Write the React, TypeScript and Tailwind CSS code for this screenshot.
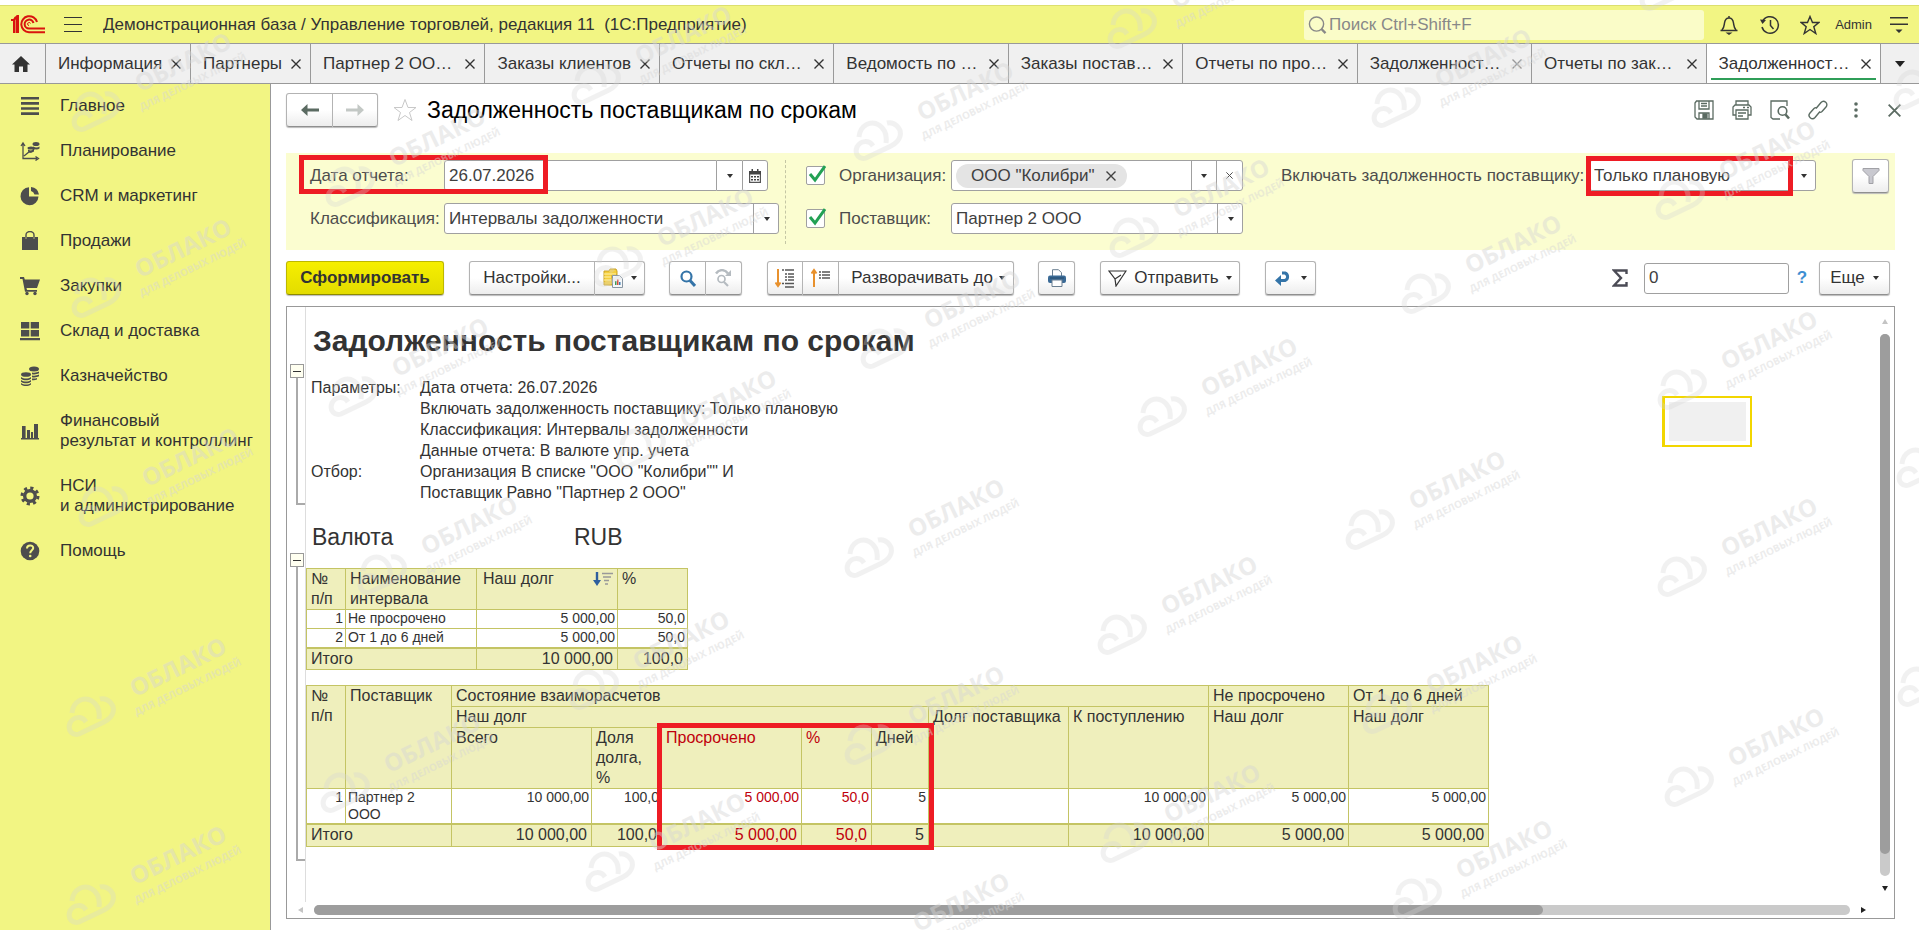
import React from 'react';

const tabs = [
  { title: 'Партнер 2 ОО…' },
  { title: 'Заказы клиентов' },
  { title: 'Отчеты по скл…' },
  { title: 'Ведомость по …' },
  { title: 'Заказы постав…' },
  { title: 'Отчеты по про…' },
  { title: 'Задолженност…', dim: true },
  { title: 'Отчеты по зак…' },
  { title: 'Задолженност…', active: true },
];

const menu = [
  { icon: 'main', label: ['Главное'] },
  { icon: 'plan', label: ['Планирование'] },
  { icon: 'crm', label: ['CRM и маркетинг'] },
  { icon: 'sales', label: ['Продажи'] },
  { icon: 'cart', label: ['Закупки'] },
  { icon: 'stock', label: ['Склад и доставка'] },
  { icon: 'money', label: ['Казначейство'] },
  { icon: 'chart', label: ['Финансовый', 'результат и контроллинг'] },
  { icon: 'gear', label: ['НСИ', 'и администрирование'] },
  { icon: 'help', label: ['Помощь'] },
];

// centres of the cloud marks
const marks = [
  [96, 112], [350, 187], [96, 298], [596, 85], [618, 267], [1132, 29], [878, 141], [1134, 238],
  [1396, 108], [1680, 200], [1426, 294], [1918, 90], [1664, -9], [353, 397], [641, 449], [103, 507],
  [382, 575], [885, 349], [1162, 417], [869, 558], [1122, 635], [1682, 390], [1370, 530], [1682, 577],
  [1921, 468], [91, 717], [91, 905], [345, 793], [594, 690], [610, 872], [869, 745], [1125, 843],
  [874, 952], [1387, 714], [1689, 787], [1417, 899], [1922, 687],
];

const Watermarks: React.FC = () => (
  <div aria-hidden="true" className="pointer-events-none absolute inset-0 z-30 select-none overflow-hidden text-[#d6d6d6] opacity-45">
    {marks.map(([x, y]) => (
      <div key={`${x}-${y}`} className="absolute" style={{ left: x, top: y }}>
        <svg className="absolute -left-[25px] -top-[21px] opacity-70" width="50" height="42" viewBox="0 0 50 42" fill="none" stroke="currentColor" strokeWidth="5">
          <path d="M6 17C7 5 18 0 26 5c6 4 8 11 7 18" />
          <path d="M20 26C16 20 8 20 4 27c-3 8 3 13 9 11l25-12c10-5 12-14 6-20-3-3-6-4-10-3" />
        </svg>
        <div className="absolute left-[30px] -top-[66px] w-[120px] -rotate-[26deg] text-center font-['Open_Sans',sans-serif] font-bold whitespace-nowrap">
          <div className="text-[24px] leading-[30px]">ОБЛАКО</div>
          <div className="text-[10px] leading-[14px]">ДЛЯ ДЕЛОВЫХ ЛЮДЕЙ</div>
        </div>
      </div>
    ))}
  </div>
);

const Caret: React.FC = () => (
  <svg className="shrink-0" width="6" height="4" viewBox="0 0 6 4" fill="#333"><path d="M0 0h6L3 4z" /></svg>
);

const Cross: React.FC<{ size?: number }> = ({ size = 10 }) => (
  <svg width={size} height={size} viewBox="0 0 10 10" stroke="currentColor" strokeWidth="1.4"><path d="M.5.5l9 9M9.5.5l-9 9" /></svg>
);

const MenuIcon: React.FC<{ name: string }> = ({ name }) => (
  <svg className="shrink-0" width="20" height="20" viewBox="0 0 20 20" fill="#4d4d4d">
    {name === 'main' && <path d="M1 1h18v2.6H1zM1 6.1h18v2.6H1zM1 11.2h18v2.6H1zM1 16.3h18v2.6H1z" />}
    {name === 'plan' && (
      <>
        <path d="M3 3v14.5h14M1 5l2-3 2 3M15.500 15.500l3 2-3 2M4 15l5-4 2 0 4-4" fill="none" stroke="#4d4d4d" strokeWidth="1.3" />
        <ellipse cx="11" cy="7" rx="3.500" ry="1.500" /><ellipse cx="16" cy="3" rx="3.500" ry="2" />
        <path d="M8 8.500c2 1.200 4.500 1.200 6 0v2c-2 1.200-4 1.200-6 0zM13 5.500c2 1.200 5 1.200 6.500 0v2c-1.500 1.200-4.500 1.200-6.500 0z" />
      </>
    )}
    {name === 'crm' && <path d="M9 1.200V10.500h9.500A9 9 0 1 1 9 1.200zM11 1a9 9 0 0 1 8 7.500h-4.500A5 5 0 0 0 11 5z" />}
    {name === 'sales' && (
      <>
        <path d="M2 6h3v2h2V6h6v2h2V6h3v13H2z" />
        <path d="M6 8V4a4 3.500 0 0 1 8 0v4" fill="none" stroke="#4d4d4d" strokeWidth="1.400" />
      </>
    )}
    {name === 'cart' && (
      <>
        <path d="M0 1h4l.8 2.500H20l-3 8.500H6.500l.5 2h10v1.700H5L2.500 3H0z" />
        <circle cx="7" cy="17.500" r="1.700" /><circle cx="15" cy="17.500" r="1.700" />
      </>
    )}
    {name === 'stock' && <path d="M1 1h8.300v6.500H1zM10.700 1H19v6.500h-8.300zM1 9h8.300v6.500H1zM10.700 9H19v6.500h-8.300zM0 17h20v2.300H0z" />}
    {name === 'money' && (
      <>
        <ellipse cx="14" cy="3" rx="5" ry="2.500" /><ellipse cx="6" cy="8.500" rx="5" ry="2.300" />
        <path d="M1 11c3 2 7 2 10 0v1.700c-3 2-7 2-10 0zM1 14c3 2 7 2 10 0v1.700c-3 2-7 2-10 0zM1 17c3 2 7 2 10 0v1.500c-3 2-7 2-10 0zM12 6.500c3 .5 5 0 7-1v1.700c-2 1-4 1.500-7 1zM12 9.500c3 .5 5 0 7-1v1.700c-2 1-4 1.500-7 1zM12 12.500c2 .3 4 0 5-.500v1.600c-2 .8-3 .9-5 .6z" />
      </>
    )}
    {name === 'chart' && <path d="M1 17h18v1.600H1zM2 5h3.600v12H2zM7 9h3v8H7zM11 11h2v6h-2zM14 3h4v14h-4z" />}
    {name === 'gear' && (
      <>
        <circle cx="10" cy="10" r="5.300" fill="none" stroke="#4d4d4d" strokeWidth="3.400" />
        <circle cx="10" cy="10" r="8" fill="none" stroke="#4d4d4d" strokeWidth="3" strokeDasharray="3.140 3.143" />
      </>
    )}
    {name === 'help' && (
      <>
        <circle cx="10" cy="10" r="9.300" />
        <path d="M7 7.500c0-4 6.200-4 6.200-.5 0 2.200-3 2.200-3 5.200" fill="none" stroke="#f2f583" strokeWidth="2" />
        <circle cx="10.200" cy="15" r="1.300" fill="#f2f583" />
      </>
    )}
  </svg>
);

const Tab: React.FC<{ title: string; active?: boolean; dim?: boolean; className?: string }> = ({ title, active, dim, className = 'flex-1' }) => (
  <div className={`relative flex min-w-0 items-center justify-between border-r border-[#999] pl-3 pr-[9px] ${active ? 'bg-white' : ''} ${className}`}>
    <a href="#tab" className="truncate text-[17px] leading-5 text-[#333]">{title}</a>
    <button type="button" aria-label="Закрыть вкладку" className={dim ? 'text-[#999]' : 'text-[#333]'}><Cross /></button>
    {active && <span className="absolute bottom-[3px] left-1 right-1 h-[2px] bg-[#2f9e58]" />}
  </div>
);

const ToolButton: React.FC<{ className?: string; label?: string; children: React.ReactNode }> = ({ className = '', label, children }) => (
  <button
    type="button"
    aria-label={label}
    className={`flex h-[34px] items-center justify-center border border-[#b3b3b3] border-b-[#8f8f8f] bg-linear-to-b from-white from-50% to-[#ededed] text-[17px] text-[#333] shadow-[0_1px_1px_#bbb] ${className}`}
  >
    {children}
  </button>
);

const Select: React.FC<{ id: string; value: string; className?: string }> = ({ id, value, className = '' }) => (
  <div className={`relative h-[31px] ${className}`}>
    <select id={id} className="h-full w-full appearance-none rounded-[3px] border border-[#a0a0a0] bg-white pl-1 pr-7 text-[17px] text-[#404040]">
      <option>{value}</option>
    </select>
    <span className="pointer-events-none absolute inset-y-0 right-0 flex w-[26px] items-center justify-center border-l border-[#a0a0a0]"><Caret /></span>
  </div>
);

const Check: React.FC<{ id: string; label: string }> = ({ id, label }) => (
  <div className="flex w-[145px] items-center gap-[14px]">
    <span className="relative size-[19px]">
      <input id={id} type="checkbox" defaultChecked className="block size-[19px] appearance-none rounded-xs border border-[#a0a0a0] bg-white" />
      <svg className="pointer-events-none absolute left-[2px] -top-[2px]" width="18" height="20" viewBox="0 0 18 20" fill="none" stroke="#23a154" strokeWidth="3"><path d="M2 10l5 6L17 2" /></svg>
    </span>
    <label htmlFor={id}>{label}</label>
  </div>
);

const Header: React.FC = () => (
  <header className="mt-[5px] flex h-[39px] items-center border-t border-b border-t-[#dcdf6f] border-b-[#999] bg-[#f2f583] text-[#333]">
    <svg className="ml-[11px] shrink-0" width="34" height="19" viewBox="0 0 34 19" fill="none" stroke="#d9140e" strokeWidth="2">
      <path d="M0 5h3v13M3 4.500L5.500 2v16M3.500 3l3.500-2V18" />
      <path d="M26 7A8 8 0 1 0 18 17.200h16" />
      <path d="M22.500 8A4.500 4.500 0 1 0 18 13.600h16" />
      <path d="M19.500 8.500a1.500 1.500 0 1 0-1.500 2" strokeWidth="1" />
    </svg>
    <button type="button" aria-label="Меню" className="ml-[19px] flex w-[18px] flex-col gap-[6px]">
      <span className="h-px w-full bg-[#333]" /><span className="h-px w-full bg-[#333]" /><span className="h-px w-full bg-[#333]" />
    </button>
    <span className="ml-[21px] flex-1 truncate text-[17px] whitespace-pre">Демонстрационная база / Управление торговлей, редакция 11  (1С:Предприятие)</span>
    <label className="flex h-[30px] w-[400px] items-center gap-[2px] rounded-[3px] bg-[#fafcc8] pl-1 text-[#888]">
      <svg width="20" height="20" viewBox="0 0 20 20" fill="none" stroke="currentColor" strokeWidth="1.500"><circle cx="9" cy="9" r="7.500" /><path d="M14 14l4.500 4.500" strokeWidth="2.500" /></svg>
      <input aria-label="Поиск" placeholder="Поиск Ctrl+Shift+F" className="w-full bg-transparent text-[17px] outline-none placeholder:text-[#888]" />
    </label>
    <button type="button" aria-label="Уведомления" className="ml-[15px]">
      <svg width="20" height="20" viewBox="0 0 20 20" fill="none" stroke="#333" strokeWidth="1.500"><path d="M1.500 15.500h17M3 15c2-2 2-4 2.500-7C6 4.500 8 3 10 3s4 1.500 4.500 5c.5 3 .5 5 2.500 7M10 3V1" /><path d="M6.500 17.500h7L10 20z" fill="#333" stroke="none" /></svg>
    </button>
    <button type="button" aria-label="История" className="ml-[21px]">
      <svg width="20" height="20" viewBox="0 0 20 20" fill="none" stroke="#333" strokeWidth="1.500"><path d="M2.500 6.500A8.300 8.300 0 1 1 2 12" /><path d="M0 4.500l6 .5-3.500 4z" fill="#333" stroke="none" /><path d="M10.500 5v5.500l3 3.500" /></svg>
    </button>
    <button type="button" aria-label="Избранное" className="ml-[20px]">
      <svg width="20" height="20" viewBox="0 0 20 20" fill="none" stroke="#333" strokeWidth="1.400"><path d="M10 1.500l2.500 6h6.300l-5 4.200 2 6.800-5.800-4-5.800 4 2-6.800-5-4.200h6.300z" /></svg>
    </button>
    <a href="#user" className="ml-[15px] text-[13px]">Admin</a>
    <button type="button" aria-label="Настройка панели" className="ml-[18px] mr-[11px]">
      <svg width="18" height="16" viewBox="0 0 18 16" fill="#333"><path d="M0 0h18v1.500H0zM0 6.500h18V8H0zM5.500 12.500h7L9 16z" /></svg>
    </button>
  </header>
);

const TabBar: React.FC = () => (
  <nav className="flex h-10 border-b border-[#999] bg-[#f0f0f0]">
    <a href="#home" aria-label="Начальная страница" className="flex w-[46px] shrink-0 items-center justify-center border-r border-[#999] pr-[3px]">
      <svg width="18" height="16" viewBox="0 0 18 16" fill="#333"><path d="M9 0l9 8.500h-2.500V16H11v-5.500H7V16H2.500V8.500H0z" /></svg>
    </a>
    <Tab title="Информация" className="w-[145px] shrink-0" />
    <Tab title="Партнеры" className="w-[120px] shrink-0" />
    {tabs.map((tab, i) => <Tab key={i} {...tab} />)}
    <button type="button" aria-label="Все вкладки" className="flex w-[38px] shrink-0 items-center justify-center">
      <svg width="10" height="6" viewBox="0 0 10 6" fill="#222"><path d="M0 0h10L5 6z" /></svg>
    </button>
  </nav>
);

const Sidebar: React.FC = () => (
  <nav className="w-[271px] shrink-0 border-r border-[#999] bg-[#f2f583]">
    {menu.map(({ icon, label }) => (
      <a key={icon} href={`#${icon}`} className="flex items-center gap-5 pt-3 pb-[13px] pl-5 text-[17px] leading-5 text-[#333]">
        <MenuIcon name={icon} />
        <span>{label.map((line) => <span key={line} className="block">{line}</span>)}</span>
      </a>
    ))}
  </nav>
);

const PageHeader: React.FC = () => (
  <div className="flex h-[30px] items-center">
    <ToolButton label="Назад" className="h-[30px] w-[47px] rounded-l-[3px]">
      <svg width="18" height="12" viewBox="0 0 18 12" fill="#5b6b62"><path d="M0 6l6.500-6v4.500H18v3H6.500V12z" /></svg>
    </ToolButton>
    <ToolButton label="Вперед" className="h-[30px] w-[45px] rounded-r-[3px] border-l-0">
      <svg width="18" height="12" viewBox="0 0 18 12" fill="#c3c8c5"><path d="M18 6l-6.500-6v4.500H0v3h11.500V12z" /></svg>
    </ToolButton>
    <button type="button" aria-label="В избранное" className="ml-[15px]">
      <svg width="24" height="24" viewBox="0 0 24 24" fill="none" stroke="#c8c8c8"><path d="M12 1.500l3 8h8l-6.500 5 2.500 8-7-5-7 5 2.500-8L1 9.500h8z" /></svg>
    </button>
    <h1 className="ml-[10px] flex-1 text-[23px] leading-7 text-black">Задолженность поставщикам по срокам</h1>
    <div className="-mr-[9px] flex items-center gap-[18px] text-[#5b6b62]">
      <button type="button" aria-label="Сохранить"><svg width="20" height="20" viewBox="0 0 20 20" fill="none" stroke="currentColor" strokeWidth="1.300"><path d="M1 3l1.500-2H19v18H3l-2-2zM5 1v8h10V1M5 19v-6h10v6M7 3.500h6M7 6h6" /><path d="M9 14h4v4H9z" fill="currentColor" /></svg></button>
      <button type="button" aria-label="Печать"><svg width="20" height="20" viewBox="0 0 20 20" fill="none" stroke="currentColor" strokeWidth="1.300"><path d="M4 5V1h12v4M4 15H1V7l2-2h14l2 2v8h-3M4 10h12v9H4zM6 13h8M6 16h5M11 7.500h2M15 7.500h2" /></svg></button>
      <button type="button" aria-label="Предварительный просмотр"><svg width="20" height="20" viewBox="0 0 20 20" fill="none" stroke="currentColor" strokeWidth="1.300"><path d="M10 19H3l-2-1.500V1h16v5" /><circle cx="12.500" cy="11" r="4.300" strokeWidth="1.600" /><path d="M15.500 14.500l3.500 4" strokeWidth="2.500" /></svg></button>
      <button type="button" aria-label="Ссылка"><svg width="20" height="20" viewBox="0 0 20 20" fill="none" stroke="currentColor" strokeWidth="1.400"><path d="M8 8.500l5-6a3.300 3.300 0 0 1 5 4.500l-4 4.500q-1.500 1.500-3 .5M12 11.500l-5 6a3.300 3.300 0 0 1-5-4.500l4-4.500q1.500-1.500 3-.5" /></svg></button>
      <button type="button" aria-label="Еще" className="flex w-5 justify-center"><svg width="4" height="16" viewBox="0 0 4 16" fill="currentColor"><circle cx="2" cy="2" r="1.800" /><circle cx="2" cy="8" r="1.800" /><circle cx="2" cy="14" r="1.800" /></svg></button>
      <button type="button" aria-label="Закрыть" className="flex w-5 justify-center"><Cross size={13} /></button>
    </div>
  </div>
);

const Filters: React.FC = () => (
  <section className="mt-[28px] flex h-[97px] bg-[#fbfdd0] pl-6 pr-[6px] pt-[7px] text-[17px] leading-5 text-[#4d4d4d]">
    <div className="flex w-[475px] shrink-0 flex-col gap-3">
      <div className="relative flex items-center">
        <label htmlFor="date" className="w-[134px]">Дата отчета:</label>
        <input id="date" defaultValue="26.07.2026" className="h-[31px] w-[273px] rounded-l-[3px] border border-[#a0a0a0] bg-white pl-1 text-[#404040]" />
        <button type="button" aria-label="Выбрать" className="flex h-[31px] w-[25px] items-center justify-center border-y border-[#a0a0a0] bg-white"><Caret /></button>
        <button type="button" aria-label="Календарь" className="flex h-[31px] w-[26px] items-center justify-center rounded-r-[3px] border border-[#a0a0a0] bg-white">
          <svg width="12" height="14" viewBox="0 0 12 14"><path d="M.6 2.600h10.800v10.800H.6z" fill="none" stroke="#555" strokeWidth="1.200" /><path d="M0 2h12v3.500H0zM2.500 0h1.500v3H2.500zM8 0h1.500v3H8zM2 7h2v1.500H2zM5 7h2v1.500H5zM8 7h2v1.500H8zM2 10h2v1.500H2zM5 10h2v1.500H5zM8 10h2v1.500H8z" fill="#444" /></svg>
        </button>
        <span className="pointer-events-none absolute -left-[11px] -top-[5px] h-[39px] w-[249px] border-[5px] border-[#ee1c24]" />
      </div>
      <div className="flex items-center">
        <label htmlFor="classification" className="w-[134px]">Классификация:</label>
        <Select id="classification" value="Интервалы задолженности" className="w-[335px]" />
      </div>
    </div>
    <div className="flex h-[84px] shrink-0 flex-col gap-3 border-l border-dashed border-[#c4c6a4] pl-[20px]">
      <div className="flex items-center">
        <Check id="org" label="Организация:" />
        <div className="flex h-[31px] w-[292px] rounded-[3px] border border-[#a0a0a0] bg-white">
          <div className="flex flex-1 items-center pl-1">
            <span className="flex h-6 w-[171px] items-center rounded-full bg-[#e4e4e4] pl-[15px] text-[#404040]">
              ООО "Колибри"
              <button type="button" aria-label="Убрать" className="ml-[11px]"><Cross /></button>
            </span>
          </div>
          <button type="button" aria-label="Выбрать организацию" className="flex w-[25px] items-center justify-center border-l border-[#a0a0a0]"><Caret /></button>
          <button type="button" aria-label="Очистить" className="flex w-[26px] items-center justify-center border-l border-[#a0a0a0]"><Cross size={7} /></button>
        </div>
      </div>
      <div className="flex items-center">
        <Check id="supplier" label="Поставщик:" />
        <Select id="supplier-value" value="Партнер 2 ООО" className="w-[292px]" />
      </div>
    </div>
    <div className="relative ml-[38px] flex h-[31px] shrink-0 items-center">
      <label htmlFor="debt" className="w-[308px] whitespace-nowrap">Включать задолженность поставщику:</label>
      <Select id="debt" value="Только плановую" className="w-[227px]" />
      <span className="pointer-events-none absolute left-[305px] -top-1 h-10 w-[207px] border-[5px] border-[#ee1c24]" />
    </div>
    <ToolButton label="Фильтр" className="-mt-px ml-auto h-[32px] w-[37px] rounded-[3px]">
      <svg width="18" height="16" viewBox="0 0 18 16" fill="#c9c9d0" stroke="#a1a1a6"><path d="M1 .5h16v2L11 8.500v7H7v-7L1 2.500z" /></svg>
    </ToolButton>
  </section>
);

const Toolbar: React.FC = () => (
  <div className="mt-[11px] flex items-center">
    <button type="button" className="h-[34px] w-[158px] rounded-[3px] border border-[#bdb800] border-b-[#8d8a00] bg-linear-to-b from-[#f6ef00] to-[#e3dc00] text-[17px] font-bold text-[#333] shadow-[0_1px_1px_#bbb]">Сформировать</button>
    <ToolButton className="ml-[25px] w-[126px] rounded-l-[3px]">Настройки...</ToolButton>
    <ToolButton label="Варианты отчета" className="w-[50px] gap-[7px] rounded-r-[3px] border-l-0">
      <svg width="21" height="20" viewBox="0 0 21 20"><path d="M1 3h5l1-2h6l1 2v4H9v10H1z" fill="#f5cf3c" stroke="#c9a227" /><path d="M1 6h12M1 9h7M1 12h7" stroke="#fff3b0" /><path d="M9.500 7.500h7l3 3v9h-10z" fill="#f6f8fa" stroke="#8896a3" /><path d="M12 13h1.500v4H12z" fill="#3c9b55" /><path d="M14 11.500h1.500V17H14z" fill="#d94d3f" /><path d="M16 14h1.500v3H16z" fill="#3c7bb0" /></svg>
      <Caret />
    </ToolButton>
    <ToolButton label="Найти" className="ml-[24px] w-[37px] rounded-l-[3px]">
      <svg width="16" height="17" viewBox="0 0 16 17" fill="none" stroke="#3474a8"><circle cx="6.500" cy="6.500" r="5" strokeWidth="2.200" /><path d="M10 10.500l5 5.500" strokeWidth="3" /></svg>
    </ToolButton>
    <ToolButton label="Найти далее" className="w-[36px] rounded-r-[3px] border-l-0">
      <svg width="17" height="18" viewBox="0 0 17 18" fill="none" stroke="#b5bbc0"><circle cx="6.500" cy="10" r="3.500" strokeWidth="1.700" /><path d="M9 13l4 4" strokeWidth="2.200" /><path d="M1 4.500C4 0 10 0 13 4.500" strokeWidth="2.400" /><path d="M16 1v6h-6z" fill="#b5bbc0" stroke="none" /></svg>
    </ToolButton>
    <ToolButton label="Развернуть" className="ml-[25px] w-[36px] rounded-l-[3px]">
      <svg width="20" height="20" viewBox="0 0 20 20" fill="none"><path d="M3 1v16M.5 14.500L3 18l2.500-3.500" stroke="#e8912d" strokeWidth="2" /><path d="M7 2h2M10 2h9M10 6h2M13 6h6M10 9h2M13 9h6M10 12h2M13 12h6M7 15.500h2M10 15.500h9M10 19h9" stroke="#555" strokeWidth="1.500" /></svg>
    </ToolButton>
    <ToolButton label="Свернуть" className="w-[36px] border-l-0">
      <svg width="20" height="20" viewBox="0 0 20 20" fill="none"><path d="M3 19V3M.5 5.500L3 2l2.500 3.500" stroke="#e8912d" strokeWidth="2" /><path d="M8 4h2M11 4h8M8 7h2M11 7h8M8 10h2M11 10h8" stroke="#555" strokeWidth="1.600" /></svg>
    </ToolButton>
    <ToolButton className="w-[175px] gap-[6px] rounded-r-[3px] border-l-0 pl-1">Разворачивать до <Caret /></ToolButton>
    <ToolButton label="Печать" className="ml-[24px] w-[37px] rounded-[3px]">
      <svg width="18" height="18" viewBox="0 0 18 18"><path d="M4.500 7V.7h6l3 3V7" fill="#fff" stroke="#6b7f91" /><rect y="6.500" width="18" height="7.500" rx="2" fill="#3a6a96" /><path d="M2 9h14" stroke="#254a6d" /><path d="M4 11h10v6.500H4z" fill="#fff" stroke="#6b7f91" /></svg>
    </ToolButton>
    <ToolButton className="ml-[25px] w-[140px] gap-[7px] rounded-[3px]">
      <svg width="19" height="17" viewBox="0 0 19 17" fill="none" stroke="#333" strokeWidth="1.200"><path d="M1 1h17L8 16 7 9zM1 1l6 8 6-4" /></svg>
      Отправить <Caret />
    </ToolButton>
    <ToolButton label="История отчета" className="ml-[25px] w-[51px] gap-[10px] rounded-[3px]">
      <svg width="16" height="15" viewBox="0 0 16 15"><path d="M4 9.500h6a4 4 0 0 0 0-7.500H7" fill="none" stroke="#3474a8" strokeWidth="3" /><path d="M0 9.500L6 4v11z" fill="#3474a8" /></svg>
      <Caret />
    </ToolButton>
    <div className="ml-auto flex items-center">
      <svg width="16" height="18" viewBox="0 0 16 18" fill="none" stroke="#4b4b55" strokeWidth="2.400"><path d="M14.500 5V1.500H2L9 9l-7 7.500h12.500V13" /></svg>
      <input aria-label="Сумма" defaultValue="0" className="ml-4 h-[31px] w-[145px] rounded-[3px] border border-[#a0a0a0] bg-white pl-1 text-[17px] text-[#404040]" />
      <a href="#help" className="ml-[7px] w-[12px] text-center text-[17px] font-bold text-[#3f8fd2]">?</a>
      <ToolButton className="ml-[11px] mr-[5px] w-[71px] gap-2 rounded-[3px]">Еще <Caret /></ToolButton>
    </div>
  </div>
);

const Group: React.FC<{ children: React.ReactNode; className?: string }> = ({ children, className = '' }) => (
  <section className="flex">
    <div className="flex w-[19px] shrink-0 flex-col border-r border-[#ddd] pl-[3px]">
      <button type="button" aria-label="Свернуть группу" className="flex size-[14px] items-center justify-center border border-[#999] bg-[#fffff0]">
        <span className="h-px w-2 bg-[#333]" />
      </button>
      <span className="ml-[6px] flex-1 border-b-2 border-l-2 border-[#aaa]" />
    </div>
    <div className={className}>{children}</div>
  </section>
);

const params = [
  ['Параметры:', 'Дата отчета: 26.07.2026'],
  ['', 'Включать задолженность поставщику: Только плановую'],
  ['', 'Классификация: Интервалы задолженности'],
  ['', 'Данные отчета: В валюте упр. учета'],
  ['Отбор:', 'Организация В списке "ООО "Колибри"" И'],
  ['', 'Поставщик Равно "Партнер 2 ООО"'],
];

const head = 'border border-[#c4c464] bg-[#efefbc] px-1 text-left align-top text-[16px] leading-5 font-normal whitespace-nowrap';
const cell = 'border border-[#c4c464] px-[2px] align-top text-[14px] leading-[17px]';
const num = `${cell} text-right`;
const total = 'border border-t-2 border-[#c4c464] bg-[#efefbc] px-1 text-right text-[16px] leading-5';
const red = 'text-[#c0000c]';

const IntervalTable: React.FC = () => (
  <table className="w-[381px] table-fixed border-collapse">
    <colgroup>
      <col className="w-[39px]" /><col className="w-[131px]" /><col className="w-[141px]" /><col className="w-[70px]" />
    </colgroup>
    <thead>
      <tr className="h-[41px]">
        <th className={head}>№<br />п/п</th>
        <th className={head}>Наименование<br />интервала</th>
        <th className={head}>
          <span className="flex items-center justify-between pl-[2px]">
            Наш долг
            <svg width="20" height="14" viewBox="0 0 20 14" fill="none"><path d="M4 0v10" stroke="#2e5f9e" strokeWidth="2.400" /><path d="M0 8h8l-4 6z" fill="#2e5f9e" /><path d="M9 1.500h11M10 5h8M11 8.500h5M12 12h3" stroke="#999" strokeWidth="1.600" /></svg>
          </span>
        </th>
        <th className={head}>%</th>
      </tr>
    </thead>
    <tbody>
      <tr className="h-[19px]"><td className={num}>1</td><td className={cell}>Не просрочено</td><td className={num}>5 000,00</td><td className={num}>50,0</td></tr>
      <tr className="h-[19px]"><td className={num}>2</td><td className={cell}>От 1 до 6 дней</td><td className={num}>5 000,00</td><td className={num}>50,0</td></tr>
    </tbody>
    <tfoot>
      <tr className="h-[21px]"><td colSpan={2} className={`${total} text-left!`}>Итого</td><td className={total}>10 000,00</td><td className={total}>100,0</td></tr>
    </tfoot>
  </table>
);

const DebtTable: React.FC = () => (
  <div className="relative mt-[15px] w-[1182px]">
    <table className="w-full table-fixed border-collapse">
      <colgroup>
        <col className="w-[39px]" /><col className="w-[106px]" /><col className="w-[140px]" /><col className="w-[70px]" />
        <col className="w-[140px]" /><col className="w-[70px]" /><col className="w-[57px]" /><col className="w-[140px]" />
        <col className="w-[140px]" /><col className="w-[140px]" /><col className="w-[140px]" />
      </colgroup>
      <thead>
        <tr className="h-[21px]">
          <th rowSpan={3} className={head}>№<br />п/п</th>
          <th rowSpan={3} className={head}>Поставщик</th>
          <th colSpan={7} className={head}>Состояние взаиморасчетов</th>
          <th className={head}>Не просрочено</th>
          <th className={head}>От 1 до 6 дней</th>
        </tr>
        <tr className="h-[21px]">
          <th colSpan={5} className={head}>Наш долг</th>
          <th rowSpan={2} className={head}>Долг поставщика</th>
          <th rowSpan={2} className={head}>К поступлению</th>
          <th rowSpan={2} className={head}>Наш долг</th>
          <th rowSpan={2} className={head}>Наш долг</th>
        </tr>
        <tr className="h-[61px]">
          <th className={head}>Всего</th>
          <th className={head}>Доля<br />долга,<br />%</th>
          <th className={`${head} ${red}`}>Просрочено</th>
          <th className={`${head} ${red}`}>%</th>
          <th className={head}>Дней</th>
        </tr>
      </thead>
      <tbody>
        <tr className="h-[36px]">
          <td className={num}>1</td>
          <td className={cell}>Партнер 2<br />ООО</td>
          <td className={num}>10 000,00</td>
          <td className={num}>100,0</td>
          <td className={`${num} ${red}`}>5 000,00</td>
          <td className={`${num} ${red}`}>50,0</td>
          <td className={num}>5</td>
          <td className={num} />
          <td className={num}>10 000,00</td>
          <td className={num}>5 000,00</td>
          <td className={num}>5 000,00</td>
        </tr>
      </tbody>
      <tfoot>
        <tr className="h-[22px]">
          <td colSpan={2} className={`${total} text-left!`}>Итого</td>
          <td className={total}>10 000,00</td>
          <td className={total}>100,0</td>
          <td className={`${total} ${red}`}>5 000,00</td>
          <td className={`${total} ${red}`}>50,0</td>
          <td className={total}>5</td>
          <td className={total} />
          <td className={total}>10 000,00</td>
          <td className={total}>5 000,00</td>
          <td className={total}>5 000,00</td>
        </tr>
      </tfoot>
    </table>
    <span className="pointer-events-none absolute -bottom-[3px] left-[351px] top-[38px] w-[277px] border-[5px] border-[#ee1c24]" />
  </div>
);

const Report: React.FC = () => (
  <main className="mt-[11px] mb-[11px] flex flex-1 flex-col border border-[#999] text-[#333]">
    <div className="relative flex flex-1">
      <div className="flex flex-1 flex-col">
        <div className="flex h-[57px]">
          <span className="w-[19px] border-r border-[#ddd]" />
          <h2 className="pl-[7px] pt-4 text-[30px] leading-9 font-bold">Задолженность поставщикам по срокам</h2>
        </div>
        <Group className="pl-[5px] pt-[13px] pb-[2px]">
          <dl className="grid grid-cols-[109px_auto] text-[16px] leading-[21px]">
            {params.map(([name, value]) => (
              <React.Fragment key={value}><dt>{name}</dt><dd>{value}</dd></React.Fragment>
            ))}
          </dl>
        </Group>
        <div className="flex h-[48px]">
          <span className="w-[19px] border-r border-[#ddd]" />
          <p className="flex items-center pt-4 pl-[6px] text-[23px] leading-7"><span className="w-[262px]">Валюта</span>RUB</p>
        </div>
        <Group className="pt-[15px] pb-[14px]">
          <IntervalTable />
          <DebtTable />
        </Group>
        <div className="w-[19px] flex-1 border-r border-[#ddd]" />
      </div>
      <div className="absolute right-[142px] top-[89px] h-[51px] w-[90px] border-2 border-l-[3px] border-[#f2d600] p-1"><div className="h-full bg-[#f0f0f0]" /></div>
      <div className="mr-1 flex w-[10px] flex-col items-center pt-[12px] pb-[11px]">
        <svg width="6" height="5" viewBox="0 0 6 5" fill="#c4c4c4"><path d="M3 0l3 5H0z" /></svg>
        <div className="my-[10px] w-full flex-1 rounded-full bg-[#cacaca]"><div className="h-[96%] rounded-full bg-[#9d9d9d]" /></div>
        <svg width="6" height="5" viewBox="0 0 6 5" fill="#222"><path d="M0 0h6L3 5z" /></svg>
      </div>
    </div>
    <div className="flex h-4 items-center pl-[11px] pr-[28px]">
      <svg width="5" height="6" viewBox="0 0 5 6" fill="#c4c4c4"><path d="M5 0v6L0 3z" /></svg>
      <div className="mx-[11px] h-[10px] flex-1 rounded-full bg-[#cacaca]"><div className="h-full w-4/5 rounded-full bg-[#9d9d9d]" /></div>
      <svg width="5" height="6" viewBox="0 0 5 6" fill="#222"><path d="M0 0l5 3-5 3z" /></svg>
    </div>
  </main>
);

const App: React.FC = () => {
  return (
    <div className="relative flex min-h-screen flex-col bg-white font-['Liberation_Sans',Arial,sans-serif]">
      <Header />
      <TabBar />
      <div className="flex flex-1">
        <Sidebar />
        <div className="flex min-w-0 flex-1 flex-col pt-[11px] pl-[15px] pr-6">
          <PageHeader />
          <Filters />
          <Toolbar />
          <Report />
        </div>
      </div>
      <Watermarks />
    </div>
  );
};

export default App;
